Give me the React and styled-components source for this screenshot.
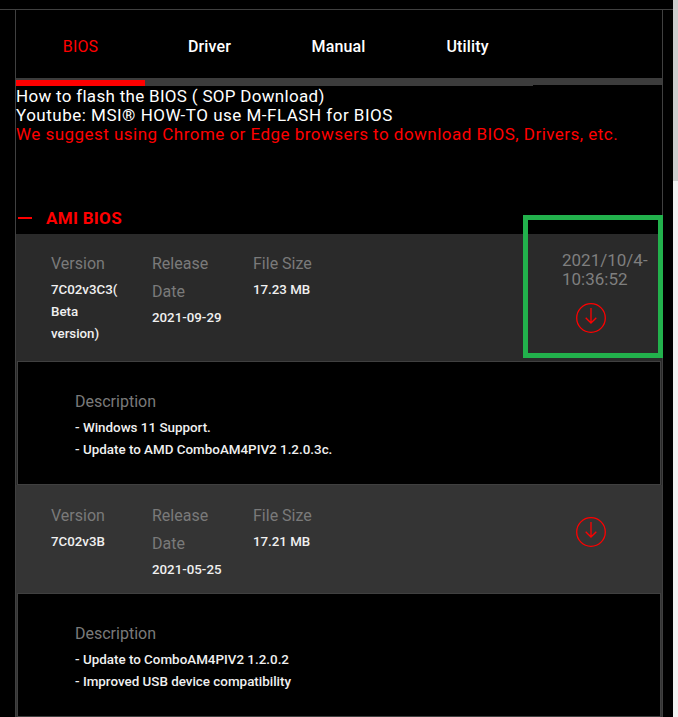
import React from 'react';
import styled, { createGlobalStyle } from 'styled-components';

const GlobalStyle = createGlobalStyle`
  html, body {
    margin: 0;
    padding: 0;
    background: #000;
    height: 717px;
    overflow: hidden;
  }
  * {
    box-sizing: border-box;
  }
`;

const Page = styled.div`
  display: flex;
  height: 717px;
  overflow: hidden;
  font-family: Roboto, "Liberation Sans", sans-serif;
`;

const Main = styled.div`
  flex: 1;
  padding-top: 9px;
`;

const Frame = styled.div`
  border-top: 1px solid #404040;
  padding: 0 10px 0 15px;
`;

const Panel = styled.div`
  border-left: 1px solid #404040;
  border-right: 1px solid #404040;
`;

const Tabs = styled.ul`
  display: flex;
  margin: 0;
  padding: 0;
  height: 68px;
  list-style: none;
`;

const Tab = styled.li`
  width: 129px;
  line-height: 73px;
  text-align: center;
  font-size: 16px;
  font-weight: ${p => (p.$active ? 400 : 500)};
  letter-spacing: 0.15px;
  color: ${p => (p.$active ? '#f00' : '#fff')};
`;

const TabStrip = styled.div`
  display: flex;
  align-items: flex-start;
  height: 8px;
`;

const TabTrack = styled.div`
  width: 517px;
  height: 8px;
  padding-top: 2px;
  background: #3c3c3c;
`;

const TabActive = styled.div`
  width: 129px;
  height: 6px;
  background: #f00;
`;

const TabRest = styled.div`
  flex: 1;
  height: 7px;
  background: #3c3c3c;
`;

const Notes = styled.div`
  padding-top: 1px;
  height: 124px;
`;

const Note = styled.div`
  font-size: 17px;
  line-height: 19px;
  letter-spacing: ${p => p.$spacing}px;
  color: ${p => (p.$warn ? '#f00' : '#fff')};
`;

const SectionHead = styled.div`
  display: flex;
  align-items: center;
  height: 24px;
  padding: 0 0 8px 2px;
  color: #f00;
  font-size: 17px;
  font-weight: 700;
  letter-spacing: 0.3px;
`;

const Dash = styled.span`
  width: 14px;
  height: 2px;
  margin-right: 14px;
  background: #f00;
`;

const Row = styled.div`
  display: flex;
  height: ${p => p.$height}px;
  padding-left: 35px;
  background: ${p => p.$bg};
`;

const Col = styled.div`
  width: 101px;
  padding: ${p => p.$top}px 20px 0 0;
`;

const Label = styled.div`
  margin-bottom: 1px;
  font-size: 16px;
  line-height: 28px;
  color: #7a7a7a;
`;

const Value = styled.div`
  font-size: 13.3px;
  font-weight: 500;
  line-height: 22px;
  color: #f0f0f0;
`;

const Action = styled.div`
  position: relative;
  display: flex;
  flex-direction: column;
  align-items: flex-start;
  width: 139px;
  margin-left: auto;
  padding-top: ${p => p.$top}px;
`;

const Stamp = styled.div`
  width: 92px;
  margin-left: 39px;
  font-size: 17px;
  line-height: 19px;
  color: #7f7f7f;
`;

const Highlight = styled.div`
  position: absolute;
  top: -19px;
  left: 0;
  right: -1px;
  bottom: 3px;
  border: 5px solid #22b14c;
`;

const DownloadIcon = styled.svg`
  display: block;
  width: 30px;
  height: 30px;
  margin-left: 53px;
  margin-top: ${p => p.$top}px;
`;

const DescWrap = styled.div`
  padding: 0 1px;
  background: ${p => p.$bg};
`;

const Description = styled.div`
  height: ${p => p.$height}px;
  padding: 27px 0 0 57px;
  background: #000;
  border: 1px solid #404040;
`;

const DescTitle = styled.div`
  margin-bottom: 2px;
  font-size: 16px;
  line-height: 26px;
  color: #7a7a7a;
`;

const DescLine = styled.div`
  font-size: 13.4px;
  font-weight: 500;
  line-height: 22px;
  color: #f0f0f0;
`;

const Scrollbar = styled.div`
  width: 5px;
  background: #f1f1f1;
`;

const ScrollThumb = styled.div`
  height: 181px;
  background: #cdcdcd;
`;

const Download = ({ top }) => (
  <DownloadIcon $top={top} viewBox="0 0 30 30" fill="none" stroke="#f00" strokeWidth="1.3">
    <circle cx="15" cy="15" r="14.3" />
    <path d="M15 5v15M9.7 14.7l5.3 5.3 5.3-5.3" />
  </DownloadIcon>
);

const Release = ({ bg, height, pad, version, date, size, stamp, descHeight, lines }) => (
  <>
    <Row $bg={bg} $height={height}>
      <Col $top={pad}>
        <Label>Version</Label>
        {version.map(v => (
          <Value key={v}>{v}</Value>
        ))}
      </Col>
      <Col $top={pad}>
        <Label>Release Date</Label>
        <Value>{date}</Value>
      </Col>
      <Col $top={pad}>
        <Label>File Size</Label>
        <Value>{size}</Value>
      </Col>
      <Action $top={stamp ? 17 : 32}>
        {stamp && <Stamp>{stamp}</Stamp>}
        <Download top={stamp ? 14 : 0} />
        {stamp && <Highlight />}
      </Action>
    </Row>
    <DescWrap $bg={bg}>
      <Description $height={descHeight}>
        <DescTitle>Description</DescTitle>
        {lines.map(line => (
          <DescLine key={line}>{line}</DescLine>
        ))}
      </Description>
    </DescWrap>
  </>
);

const App = () => (
  <Page>
    <GlobalStyle />
    <Main>
      <Frame>
        <Panel>
          <Tabs>
            <Tab $active>BIOS</Tab>
            <Tab>Driver</Tab>
            <Tab>Manual</Tab>
            <Tab>Utility</Tab>
          </Tabs>
          <TabStrip>
            <TabTrack>
              <TabActive />
            </TabTrack>
            <TabRest />
          </TabStrip>
          <Notes>
            <Note $spacing={0.3}>How to flash the BIOS ( SOP Download)</Note>
            <Note $spacing={0.5}>Youtube: MSI® HOW-TO use M-FLASH for BIOS</Note>
            <Note $spacing={0.47} $warn>
              We suggest using Chrome or Edge browsers to download BIOS, Drivers, etc.
            </Note>
          </Notes>
          <SectionHead>
            <Dash />
            AMI BIOS
          </SectionHead>
          <Release
            bg="#2a2a2a"
            height={127}
            pad={16}
            version={['7C02v3C3(', 'Beta', 'version)']}
            date="2021-09-29"
            size="17.23 MB"
            stamp="2021/10/4-10:36:52"
            descHeight={124}
            lines={['- Windows 11 Support.', '- Update to AMD ComboAM4PIV2 1.2.0.3c.']}
          />
          <Release
            bg="#343434"
            height={108}
            pad={17}
            version={['7C02v3B']}
            date="2021-05-25"
            size="17.21 MB"
            descHeight={124}
            lines={['- Update to ComboAM4PIV2 1.2.0.2', '- Improved USB device compatibility']}
          />
        </Panel>
      </Frame>
    </Main>
    <Scrollbar>
      <ScrollThumb />
    </Scrollbar>
  </Page>
);

export default App;
